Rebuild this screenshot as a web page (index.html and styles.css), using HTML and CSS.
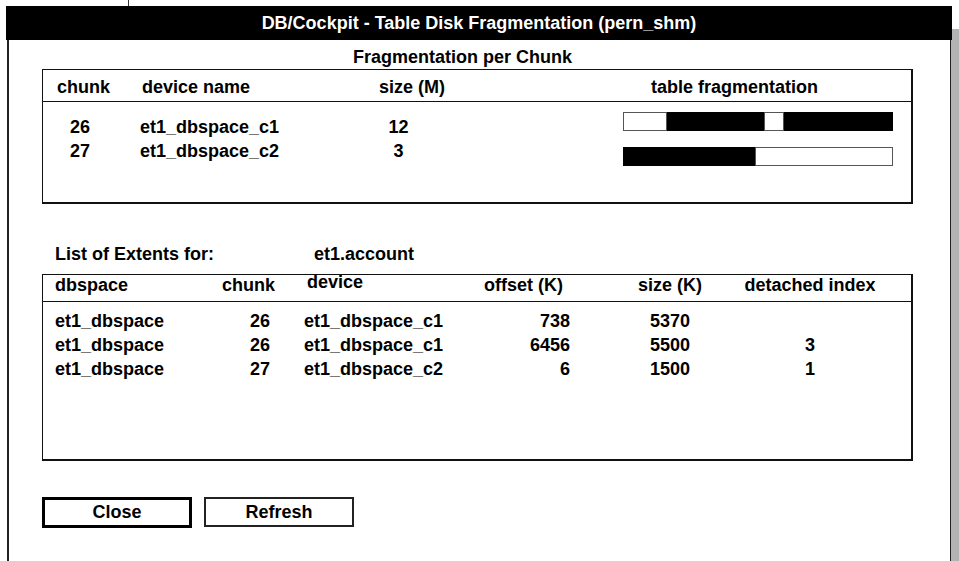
FILE: index.html
```html
<!DOCTYPE html>
<html>
<head>
<meta charset="utf-8">
<title>DB/Cockpit - Table Disk Fragmentation</title>
<link rel="stylesheet" href="styles.css">
</head>
<body>
<div class="desktop">
  <div class="behind-top"></div>
  <div class="behind-right"></div>
  <div class="window">
    <div class="titlebar">DB/Cockpit - Table Disk Fragmentation (pern_shm)</div>
    <div class="window-body">
      <div class="section-title">Fragmentation per Chunk</div>
      <div class="box chunk-box">
        <div class="chunk-head">
          <span>chunk</span>
          <span>device name</span>
          <span>size (M)</span>
          <span>table fragmentation</span>
        </div>
        <div class="chunk-body">
          <div class="chunk-rows">
            <div class="chunk-row"><span class="c-num">26</span><span class="c-dev">et1_dbspace_c1</span><span class="c-size">12</span></div>
            <div class="chunk-row"><span class="c-num">27</span><span class="c-dev">et1_dbspace_c2</span><span class="c-size">3</span></div>
          </div>
          <div class="bars">
            <div class="bar">
              <span class="seg seg-free" style="width:44px"></span>
              <span class="seg seg-used" style="width:97px"></span>
              <span class="seg seg-free" style="width:20px"></span>
              <span class="seg seg-used" style="width:109px"></span>
            </div>
            <div class="bar">
              <span class="seg seg-used" style="width:132px"></span>
              <span class="seg seg-free" style="width:138px"></span>
            </div>
          </div>
        </div>
      </div>

      <div class="extents-label"><span>List of Extents for:</span><span>et1.account</span></div>
      <div class="box extents-box">
        <div class="ext-head">
          <span>dbspace</span>
          <span>chunk</span>
          <span class="h-device">device</span>
          <span>offset (K)</span>
          <span class="center">size (K)</span>
          <span class="center">detached index</span>
        </div>
        <div class="ext-rows">
          <div class="ext-row"><span>et1_dbspace</span><span class="v-chunk">26</span><span>et1_dbspace_c1</span><span class="v-offset">738</span><span class="center">5370</span><span class="center"></span></div>
          <div class="ext-row"><span>et1_dbspace</span><span class="v-chunk">26</span><span>et1_dbspace_c1</span><span class="v-offset">6456</span><span class="center">5500</span><span class="center">3</span></div>
          <div class="ext-row"><span>et1_dbspace</span><span class="v-chunk">27</span><span>et1_dbspace_c2</span><span class="v-offset">6</span><span class="center">1500</span><span class="center">1</span></div>
        </div>
      </div>

      <div class="buttons">
        <button class="btn btn-default">Close</button>
        <button class="btn btn-plain">Refresh</button>
      </div>
    </div>
  </div>
</div>
</body>
</html>
```
FILE: styles.css
```css
* { box-sizing: border-box; }
html, body { margin: 0; padding: 0; }
body {
  width: 959px;
  height: 561px;
  overflow: hidden;
  background: #fff;
  font-family: "Liberation Sans", Arial, sans-serif;
  font-weight: bold;
  font-size: 18px;
  color: #000;
}
.desktop { position: relative; width: 959px; height: 561px; }
.behind-top { position: absolute; left: 128px; top: 0; width: 1px; height: 6px; background: #333; }
.behind-right { position: absolute; left: 951px; top: 29px; right: 0; bottom: 0; background: #b3b3b3; }

.window {
  position: absolute;
  left: 6px;
  top: 6px;
  width: 946px;
  height: 555px;
  display: flex;
  flex-direction: column;
}
.titlebar {
  height: 34px;
  flex: none;
  background: #000;
  color: #fff;
  display: flex;
  align-items: center;
  justify-content: center;
  line-height: 20px;
}
.window-body {
  flex: 1;
  margin: 0 1px;
  border-left: 2px solid #222;
  border-right: 1px solid #222;
  background: #fff;
  padding-top: 7px;
}
.section-title {
  line-height: 20px;
  padding-left: 344px;
  margin-bottom: 2px;
}
.box {
  margin-left: 33px;
  width: 871px;
  border: 1px solid #111;
  border-right-width: 2px;
  border-bottom-width: 2px;
}

/* chunk table */
.chunk-head {
  display: grid;
  grid-template-columns: 85px 237px 272px 1fr;
  padding: 7px 0 4px 14px;
  line-height: 20px;
  border-bottom: 1px solid #111;
}
.chunk-body { display: flex; height: 100px; }
.chunk-rows { flex: 1; padding: 13px 0 0 14px; }
.chunk-row {
  display: grid;
  grid-template-columns: 33px 268px 81px;
  line-height: 24px;
}
.c-num { text-align: right; }
.c-dev { padding-left: 50px; }
.c-size { text-align: center; }

.bars {
  width: 270px;
  margin-right: 18px;
  padding-top: 10px;
  display: flex;
  flex-direction: column;
  gap: 16px;
}
.bar { display: flex; width: 270px; height: 19px; }
.seg { display: block; height: 19px; flex: none; }
.seg-used { background: #000; }
.seg-free { background: #fff; border: 1px solid #555; }

/* extents table */
.extents-label {
  display: grid;
  grid-template-columns: 259px auto;
  padding-left: 46px;
  margin-top: 40px;
  margin-bottom: 10px;
  line-height: 20px;
}
.ext-head, .ext-row {
  display: grid;
  grid-template-columns: 167px 82px 180px 136px 100px 180px;
  padding-left: 12px;
}
.ext-head {
  line-height: 20px;
  padding-bottom: 6px;
  border-bottom: 1px solid #111;
}
.h-device { padding-left: 3px; margin-top: -3px; }
.ext-rows { height: 157px; padding-top: 7px; }
.ext-row { line-height: 24px; }
.v-chunk { text-align: right; padding-right: 34px; }
.v-offset { text-align: right; padding-right: 50px; }
.center { text-align: center; }

/* buttons */
.buttons {
  display: flex;
  gap: 12px;
  margin: 36px 0 0 33px;
}
.btn {
  width: 150px;
  height: 31px;
  padding: 0;
  background: #fff;
  color: #000;
  font: inherit;
  display: flex;
  align-items: center;
  justify-content: center;
  border: 3px solid #000;
  border-radius: 0;
}
.btn-plain { height: 30px; border: 2px solid #222; }
```
